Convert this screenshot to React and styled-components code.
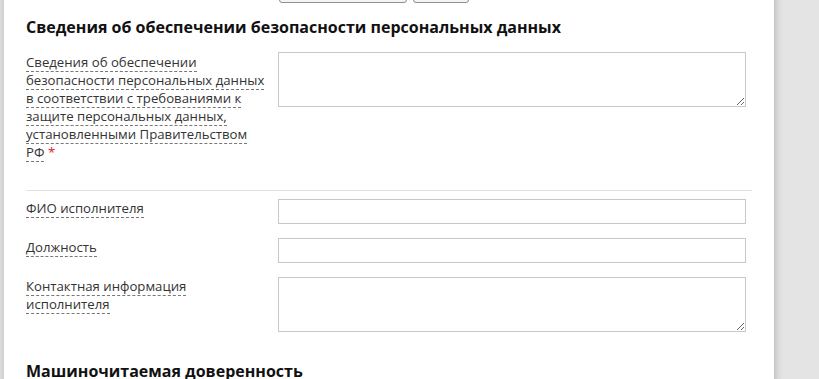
import React from 'react';
import styled, { createGlobalStyle } from 'styled-components';

const GlobalStyle = createGlobalStyle`
  html, body {
    margin: 0;
    padding: 0;
    height: 100%;
    background: #e4e4e4;
    overflow: hidden;
  }
  body {
    font-family: "Open Sans", "Noto Sans", sans-serif;
    color: #333;
  }
`;

const Page = styled.div`
  display: flex;
  height: 379px;
  background: #e4e4e4;
`;

const Gutter = styled.div`
  width: 4px;
  background: linear-gradient(to right, #dcdcdc, #d0d0d0);
`;

const Panel = styled.div`
  width: 770px;
  background: #fff;
  padding: 0 22px;
  box-sizing: border-box;
  overflow: hidden;
`;

const Backdrop = styled.div`
  flex: 1;
  background: linear-gradient(to right, #c4c4c4 0px, #dadada 4px, #e4e4e4 9px);
`;

const ButtonBar = styled.div`
  display: flex;
  gap: 6px;
  height: 3px;
  padding-left: 253px;
  overflow: hidden;
  align-items: flex-end;
`;

const Button = styled.div`
  width: ${p => p.$w}px;
  height: 24px;
  flex-shrink: 0;
  box-sizing: border-box;
  border: 1px solid #8f8f8f;
  border-radius: 3px;
  background: #f4f4f4;
`;

const Heading = styled.h2`
  margin: ${p => p.$top}px 0 0;
  font-size: 16px;
  line-height: 22px;
  font-weight: 700;
  color: #111;
`;

const Row = styled.div`
  display: grid;
  grid-template-columns: 252px 468px;
  align-items: start;
  margin-top: ${p => p.$top}px;
`;

const LabelCell = styled.div`
  width: 242px;
  padding-top: ${p => p.$pad || 0}px;
  font-size: 13.2px;
  line-height: 18px;
`;

const LabelText = styled.span`
  border-bottom: 1px dashed #777;
`;

const Required = styled.span`
  color: #d9262c;
`;

const TextInput = styled.input`
  display: block;
  width: 468px;
  height: 25px;
  box-sizing: border-box;
  border: 1px solid #c8c8c8;
  margin: 0;
  padding: 2px 5px;
  font: inherit;
  font-size: 13px;
  background: #fff;
  outline: none;
`;

const TextArea = styled.textarea`
  display: block;
  width: 468px;
  height: 55px;
  box-sizing: border-box;
  border: 1px solid #c8c8c8;
  margin: 0;
  padding: 2px 5px;
  font: inherit;
  font-size: 13px;
  background: #fff;
  outline: none;
`;

const Divider = styled.hr`
  border: 0;
  border-top: 1px solid #e3e3e3;
  margin: 29px 0 0;
  width: 726px;
  height: 0;
`;

export default function App() {
  return (
    <>
      <GlobalStyle />
      <Page>
        <Gutter />
        <Panel>
          <ButtonBar>
            <Button $w={128} />
            <Button $w={56} />
          </ButtonBar>
          <Heading $top={13}>Сведения об обеспечении безопасности персональных данных</Heading>

          <Row $top={14}>
            <LabelCell $pad={1}>
              <LabelText>
                Сведения об обеспечении безопасности персональных данных в соответствии с требованиями к защите персональных данных, установленными Правительством РФ
              </LabelText>{' '}
              <Required>*</Required>
            </LabelCell>
            <TextArea />
          </Row>

          <Divider />

          <Row $top={8}>
            <LabelCell $pad={0}>
              <LabelText>ФИО исполнителя</LabelText>
            </LabelCell>
            <TextInput />
          </Row>

          <Row $top={14}>
            <LabelCell $pad={0}>
              <LabelText>Должность</LabelText>
            </LabelCell>
            <TextInput />
          </Row>

          <Row $top={14}>
            <LabelCell $pad={0}>
              <LabelText>Контактная информация исполнителя</LabelText>
            </LabelCell>
            <TextArea />
          </Row>

          <Heading $top={28}>Машиночитаемая доверенность</Heading>
        </Panel>
        <Backdrop />
      </Page>
    </>
  );
}
